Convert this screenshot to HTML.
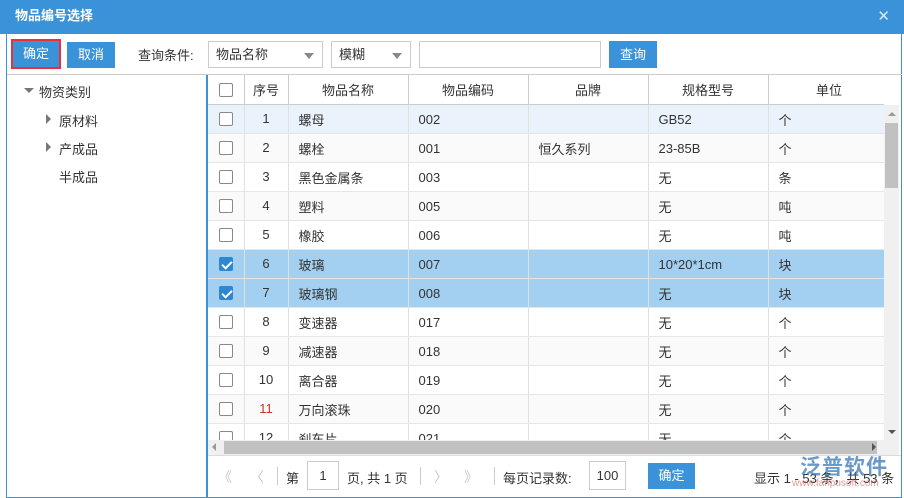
<!DOCTYPE html>
<html><head><meta charset="utf-8"><style>
*{margin:0;padding:0;box-sizing:border-box}
body{width:904px;height:498px;overflow:hidden;background:#fff;font-family:"Liberation Sans","Noto Sans CJK SC",sans-serif;font-size:13px;color:#333;position:relative}
.a{position:absolute}
.title{left:0;top:0;width:904px;height:34px;background:#3a92d8;color:#fff;font-weight:bold;font-size:13px;line-height:32px;padding-left:15px}
.frame{left:6px;top:34px;width:896px;height:464px;border:1px solid #3a92d8;border-top:none}
.btn{background:#3a92d8;color:#fff;text-align:center;font-size:13px}
.sel{border:1px solid #ccc;background:#fff;height:27px;line-height:25px;padding-left:7px}
.tri{position:absolute;right:8px;top:11px;border-left:5px solid transparent;border-right:5px solid transparent;border-top:6px solid #888}
table{border-collapse:collapse;table-layout:fixed}
td{height:29px;border-right:1px solid #e0e0e0;border-bottom:1px solid #e6e6e6;padding-left:10px;white-space:nowrap;overflow:hidden;padding-top:1px}
td.c{text-align:center;padding:0}
.cb{display:inline-block;width:14px;height:14px;border:1px solid #888;border-radius:2px;background:#fff;vertical-align:middle}
.ck{background:#2d87d3;border-color:#2d87d3;position:relative}
.ck:after{content:"";position:absolute;left:4px;top:1px;width:4px;height:8px;border:solid #fff;border-width:0 2px 2px 0;transform:rotate(45deg)}
.pg{color:#c8c8c8;font-size:14px}
</style></head><body>
<div class="a title">物品编号选择</div>
<div class="a" style="right:14px;top:7px;color:#dbe9f6;font-size:15px">✕</div>
<div class="a frame"></div>
<div class="a btn" style="left:11px;top:39px;width:50px;height:30px;border:2px solid #e8303a;line-height:26px">确定</div>
<div class="a btn" style="left:67px;top:42px;width:48px;height:26px;line-height:26px">取消</div>
<div class="a" style="left:138px;top:45px">查询条件:</div>
<div class="a sel" style="left:208px;top:41px;width:115px">物品名称<span class="tri"></span></div>
<div class="a sel" style="left:331px;top:41px;width:80px">模糊<span class="tri"></span></div>
<div class="a sel" style="left:419px;top:41px;width:182px"></div>
<div class="a btn" style="left:609px;top:41px;width:48px;height:27px;line-height:27px">查询</div>
<div class="a" style="left:7px;top:74px;width:895px;height:1px;background:#ccc"></div>
<div class="a" style="left:206px;top:75px;width:2px;height:423px;background:#3a92d8"></div>
<div class="a" style="left:24px;top:88px;border-left:5px solid transparent;border-right:5px solid transparent;border-top:5px solid #777"></div>
<div class="a" style="left:39px;top:82px">物资类别</div>
<div class="a" style="left:46px;top:114px;border-top:5px solid transparent;border-bottom:5px solid transparent;border-left:5px solid #777"></div>
<div class="a" style="left:59px;top:111px">原材料</div>
<div class="a" style="left:46px;top:142px;border-top:5px solid transparent;border-bottom:5px solid transparent;border-left:5px solid #777"></div>
<div class="a" style="left:59px;top:139px">产成品</div>
<div class="a" style="left:59px;top:167px">半成品</div>
<div class="a" style="left:208px;top:75px;width:676px;height:365px;overflow:hidden">
<table style="width:682px">
<colgroup><col style="width:36px"><col style="width:44px"><col style="width:120px"><col style="width:120px"><col style="width:120px"><col style="width:120px"><col style="width:122px"></colgroup>
<tr style="background:#fff"><td class="c" style="border-bottom:1px solid #ccc;border-right-color:#ccc"><span class="cb"></span></td><td class="c" style="border-bottom:1px solid #ccc;border-right-color:#ccc">序号</td><td class="c" style="border-bottom:1px solid #ccc;border-right-color:#ccc">物品名称</td><td class="c" style="border-bottom:1px solid #ccc;border-right-color:#ccc">物品编码</td><td class="c" style="border-bottom:1px solid #ccc;border-right-color:#ccc">品牌</td><td class="c" style="border-bottom:1px solid #ccc;border-right-color:#ccc">规格型号</td><td class="c" style="border-bottom:1px solid #ccc;border-right-color:#ccc">单位</td></tr>
<tr style="background:#eaf3fb"><td class="c"><span class="cb"></span></td><td class="c">1</td><td>螺母</td><td>002</td><td></td><td>GB52</td><td>个</td></tr>
<tr style="background:#fafafa"><td class="c"><span class="cb"></span></td><td class="c">2</td><td>螺栓</td><td>001</td><td>恒久系列</td><td>23-85B</td><td>个</td></tr>
<tr><td class="c"><span class="cb"></span></td><td class="c">3</td><td>黑色金属条</td><td>003</td><td></td><td>无</td><td>条</td></tr>
<tr style="background:#fafafa"><td class="c"><span class="cb"></span></td><td class="c">4</td><td>塑料</td><td>005</td><td></td><td>无</td><td>吨</td></tr>
<tr><td class="c"><span class="cb"></span></td><td class="c">5</td><td>橡胶</td><td>006</td><td></td><td>无</td><td>吨</td></tr>
<tr style="background:#a3d0f0"><td class="c"><span class="cb ck"></span></td><td class="c">6</td><td>玻璃</td><td>007</td><td></td><td>10*20*1cm</td><td>块</td></tr>
<tr style="background:#a3d0f0"><td class="c"><span class="cb ck"></span></td><td class="c">7</td><td>玻璃钢</td><td>008</td><td></td><td>无</td><td>块</td></tr>
<tr><td class="c"><span class="cb"></span></td><td class="c">8</td><td>变速器</td><td>017</td><td></td><td>无</td><td>个</td></tr>
<tr style="background:#fafafa"><td class="c"><span class="cb"></span></td><td class="c">9</td><td>减速器</td><td>018</td><td></td><td>无</td><td>个</td></tr>
<tr><td class="c"><span class="cb"></span></td><td class="c">10</td><td>离合器</td><td>019</td><td></td><td>无</td><td>个</td></tr>
<tr style="background:#fafafa"><td class="c"><span class="cb"></span></td><td class="c" style="color:#c0392b">11</td><td>万向滚珠</td><td>020</td><td></td><td>无</td><td>个</td></tr>
<tr><td class="c"><span class="cb"></span></td><td class="c">12</td><td>刹车片</td><td>021</td><td></td><td>无</td><td>个</td></tr>
</table></div>
<div class="a" style="left:884px;top:105px;width:15px;height:335px;background:#f0f0f0"></div>
<div class="a" style="left:885px;top:123px;width:13px;height:65px;background:#c1c1c1"></div>
<div class="a" style="left:888px;top:112px;border-left:4px solid transparent;border-right:4px solid transparent;border-bottom:4px solid #999"></div>
<div class="a" style="left:888px;top:430px;border-left:4px solid transparent;border-right:4px solid transparent;border-top:4px solid #555"></div>
<div class="a" style="left:208px;top:440px;width:691px;height:15px;background:#f0f0f0"></div>
<div class="a" style="left:224px;top:441px;width:653px;height:13px;background:#c1c1c1"></div>
<div class="a" style="left:212px;top:443px;border-top:4px solid transparent;border-bottom:4px solid transparent;border-right:4px solid #999"></div>
<div class="a" style="left:872px;top:443px;border-top:4px solid transparent;border-bottom:4px solid transparent;border-left:4px solid #555"></div>
<div class="a" style="left:208px;top:455px;width:693px;height:1px;background:#ddd"></div>
<div class="a pg" style="left:218px;top:467px">《</div>
<div class="a pg" style="left:250px;top:467px">〈</div>
<div class="a" style="left:277px;top:467px;width:1px;height:18px;background:#ccc"></div>
<div class="a" style="left:286px;top:468px">第</div>
<div class="a" style="left:307px;top:461px;width:32px;height:29px;border:1px solid #ccc;text-align:center;line-height:27px">1</div>
<div class="a" style="left:347px;top:468px">页, 共 1 页</div>
<div class="a" style="left:420px;top:467px;width:1px;height:18px;background:#ccc"></div>
<div class="a pg" style="left:434px;top:467px">〉</div>
<div class="a pg" style="left:464px;top:467px">》</div>
<div class="a" style="left:494px;top:467px;width:1px;height:18px;background:#ccc"></div>
<div class="a" style="left:503px;top:468px">每页记录数:</div>
<div class="a" style="left:589px;top:461px;width:37px;height:29px;border:1px solid #ccc;text-align:center;line-height:27px">100</div>
<div class="a btn" style="left:648px;top:463px;width:47px;height:26px;line-height:26px">确定</div>
<div class="a" style="left:754px;top:468px">显示 1 - 53 条，共 53 条</div>
<div class="a" style="left:800px;top:451px;color:#2d6fb5;font-size:21px;font-weight:bold;opacity:.7;letter-spacing:1px">泛普软件</div>
<div class="a" style="left:792px;top:478px;color:#d9534f;font-size:10px;opacity:.6">www.fanpusoft.com</div>
</body></html>
